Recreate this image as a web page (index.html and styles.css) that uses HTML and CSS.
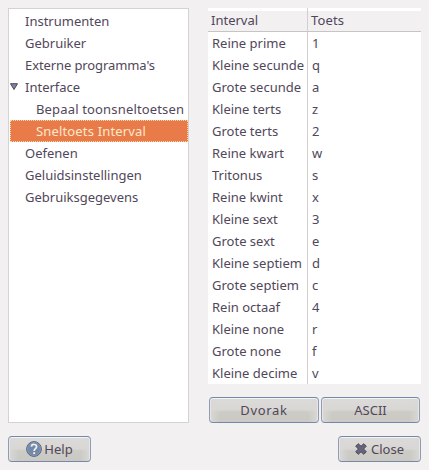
FILE: index.html
```html
<!DOCTYPE html>
<html lang="nl">
<head>
<meta charset="utf-8">
<title>Sneltoets Interval</title>
<link rel="stylesheet" href="styles.css">
</head>
<body>
<div class="dialog">
  <main class="content">
    <ul class="tree">
      <li>Instrumenten</li>
      <li>Gebruiker</li>
      <li class="tight">Externe programma's</li>
      <li class="parent"><svg class="arrow" viewBox="0 0 8 7"><path d="M.5.7h7L4 6.5z" fill="#7a85a0" stroke="#51475a"/></svg>Interface</li>
      <li class="child wide">Bepaal toonsneltoetsen</li>
      <li class="child wide selected">Sneltoets Interval</li>
      <li>Oefenen</li>
      <li>Geluidsinstellingen</li>
      <li>Gebruiksgegevens</li>
    </ul>
    <section class="keys">
      <table>
        <thead><tr><th>Interval</th><th class="wide">Toets</th></tr></thead>
        <tbody>
          <tr><td>Reine prime</td><td>1</td></tr>
          <tr><td>Kleine secunde</td><td>q</td></tr>
          <tr><td>Grote secunde</td><td>a</td></tr>
          <tr><td>Kleine terts</td><td>z</td></tr>
          <tr><td>Grote terts</td><td>2</td></tr>
          <tr><td>Reine kwart</td><td>w</td></tr>
          <tr><td>Tritonus</td><td>s</td></tr>
          <tr><td>Reine kwint</td><td>x</td></tr>
          <tr><td>Kleine sext</td><td>3</td></tr>
          <tr><td>Grote sext</td><td>e</td></tr>
          <tr><td>Kleine septiem</td><td>d</td></tr>
          <tr><td>Grote septiem</td><td>c</td></tr>
          <tr><td>Rein octaaf</td><td>4</td></tr>
          <tr><td>Kleine none</td><td>r</td></tr>
          <tr><td>Grote none</td><td>f</td></tr>
          <tr><td>Kleine decime</td><td>v</td></tr>
        </tbody>
      </table>
      <div class="layouts">
        <button class="dvorak">Dvorak</button>
        <button class="ascii">ASCII</button>
      </div>
    </section>
  </main>
  <footer class="actions">
    <button><svg class="help-icon" viewBox="0 0 16 16"><circle cx="8" cy="8" r="7.4" fill="#7488a8" stroke="#566985"/><circle cx="8" cy="8" r="6.4" fill="none" stroke="#8fa0b8" stroke-width=".7"/><path d="M5.4 5.6C5.6 2.7 10.6 2.8 10.6 5.7C10.6 7.6 8.1 7.7 8.1 10" fill="none" stroke="#f4f2f0" stroke-width="1.7"/><path d="M7.2 11.2h1.9v1.8H7.2z" fill="#f4f2f0"/></svg>Help</button>
    <button><svg class="close-icon" viewBox="0 0 12 12"><path d="M3.2.7L6 3.2L8.8.7L11.3 3.2L8.6 6L11.3 8.8L8.8 11.3L6 8.8L3.2 11.3L.7 8.8L3.4 6L.7 3.2z" fill="#64647c" stroke="#51475a" stroke-linejoin="round"/></svg>Close</button>
  </footer>
</div>
</body>
</html>
```
FILE: styles.css
```css
* { box-sizing: border-box; }

body {
  margin: 0;
  background: #f2f0f1;
  color: #51475a;
  font: 13px/22px "Noto Sans", "Open Sans", sans-serif;
}

.dialog { height: 470px; padding: 8px; }

.content {
  display: flex;
  justify-content: space-between;
  height: 415px;
}

.tree {
  width: 181px;
  margin: 0;
  padding: 1px 0 0 1px;
  list-style: none;
  background: #fff;
  border: 1px solid #d5d2d4;
  white-space: nowrap;
}

.tree li { height: 22px; padding-left: 15px; }
.tree .parent { display: flex; align-items: center; padding-left: 0; }
.arrow { width: 8px; height: 7px; margin: 0 7px 2px 0; }
.tree .child { padding-left: 26px; }
.wide { letter-spacing: .16px; }
.tight { letter-spacing: -.1px; }
.tree .selected {
  padding-left: 25px;
  color: #fbe9c8;
  background: #e97b4b;
  border: 1px dotted #fbd9a4;
  line-height: 20px;
}

.keys { width: 213px; }

table {
  width: 213px;
  height: 376px;
  table-layout: fixed;
  border-collapse: separate;
  border-spacing: 0;
  background: #fff;
}

th, td { height: 22px; padding: 0 0 0 4px; text-align: left; white-space: nowrap; }
th {
  height: 24px;
  padding: 2px 0 0 3px;
  line-height: 21px;
  font-weight: normal;
  background: linear-gradient(#fff 3px, #f2f0f1 3px);
  border-bottom: 1px solid #c7c4c6;
}
th:first-child { width: 100px; }
th:first-child, td:first-child { border-right: 1px solid #d2cfd1; }

button {
  display: flex;
  align-items: center;
  justify-content: center;
  width: 83px;
  height: 26px;
  padding: 0;
  color: #51475a;
  font: 13px/22px "Noto Sans", "Open Sans", sans-serif;
  background:
    linear-gradient(to right, #dad8d6, transparent 10px calc(100% - 10px), #dad8d6),
    linear-gradient(#dddbd9, #d8d7d4 48%, #cccbc6 58%, #cac9c4);
  border: 1px solid #7488a8;
  border-color: #7488a8 #8f9db4;
  border-radius: 4px;
  box-shadow: inset 0 1px #f5f4f3, inset 1px 0 #e8e6e5, inset -1px 0 #e8e6e5;
}

.layouts { display: flex; gap: 2px; margin: 13px 0 0 1px; }
.dvorak { width: 110px; letter-spacing: .7px; }
.ascii { width: 99px; }

.actions { display: flex; justify-content: space-between; margin-top: 13px; }
.help-icon { width: 16px; height: 16px; margin-right: 2px; }
.close-icon { width: 12px; height: 12px; margin-right: 4px; }
```
